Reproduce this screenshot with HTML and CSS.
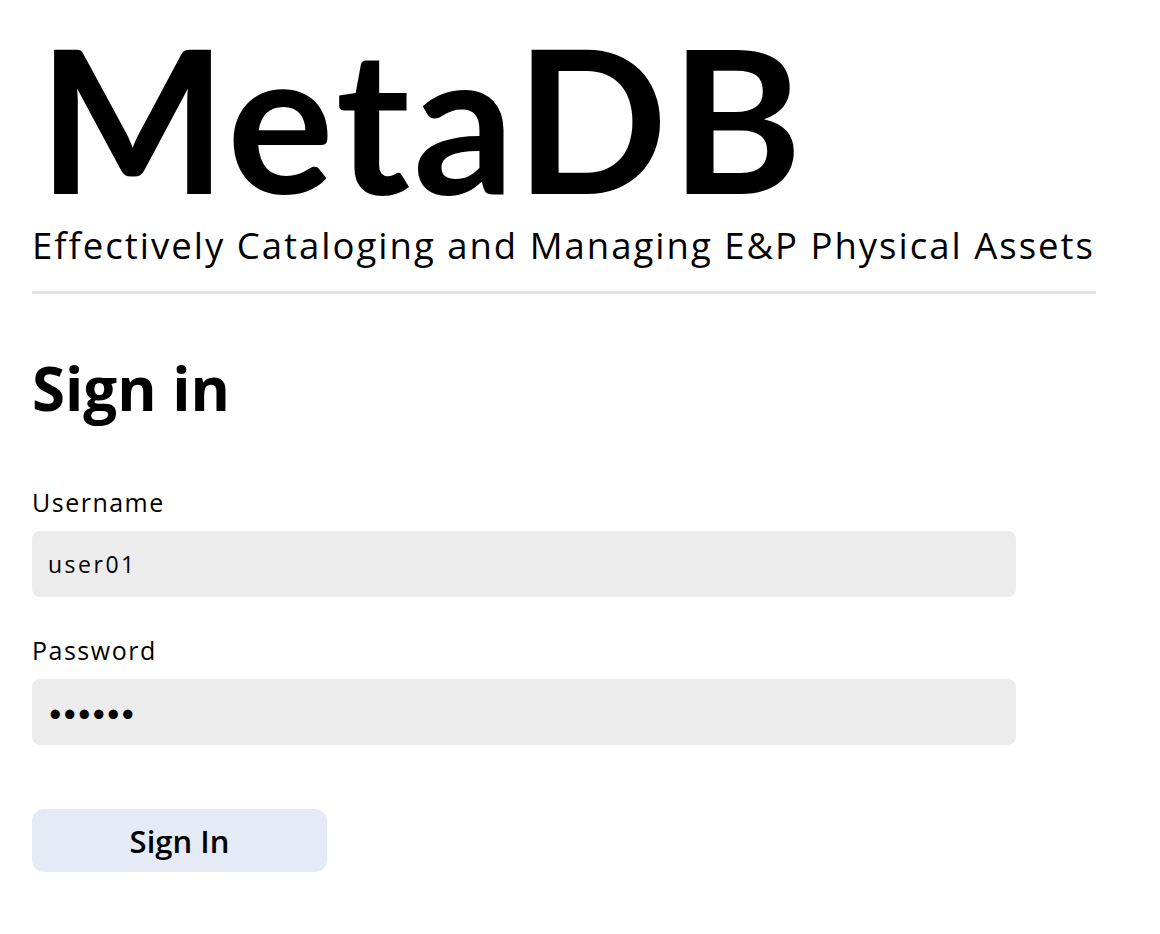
FILE: index.html
```html
<!DOCTYPE html>
<html lang="en">
<head>
<meta charset="utf-8">
<title>MetaDB - Sign in</title>
<link rel="stylesheet" href="styles.css">
</head>
<body>
<div class="page">
  <header class="masthead">
    <h1 class="brand">MetaDB</h1>
    <p class="tagline">Effectively Cataloging and Managing E&amp;P Physical Assets</p>
  </header>
  <main class="signin">
    <h2 class="signin-title">Sign in</h2>
    <form class="signin-form">
      <label class="field-label" for="username">Username</label>
      <input class="field-input" id="username" type="text" value="user01">
      <label class="field-label field-label-second" for="password">Password</label>
      <input class="field-input field-input-secret" id="password" type="password" value="123456">
      <button class="signin-button" type="button">Sign In</button>
    </form>
  </main>
</div>
</body>
</html>
```
FILE: styles.css
```css
html, body {
  margin: 0;
  padding: 0;
  background: #ffffff;
  color: #000000;
  font-family: "Open Sans", "Lato", sans-serif;
}

.page {
  width: 1064px;
  padding: 17px 32px 40px;
}

.masthead {
  display: flex;
  flex-direction: column;
  border-bottom: 3px solid #e2e2e2;
  padding-bottom: 23px;
}

.brand {
  margin: 0;
  padding-left: 6px;
  font-family: "Lato", "Open Sans", sans-serif;
  font-size: 200px;
  line-height: 200px;
  font-weight: 700;
  letter-spacing: 3px;
}

.tagline {
  margin: 5px 0 0;
  font-size: 36.5px;
  line-height: 46px;
  font-weight: 400;
  letter-spacing: 2px;
}

.signin-title {
  margin: 58px 0 0;
  font-size: 60px;
  line-height: 72px;
  font-weight: 700;
}

.signin-form {
  display: flex;
  flex-direction: column;
  align-items: flex-start;
  margin-top: 63px;
}

.field-label {
  font-size: 25px;
  line-height: 30px;
  letter-spacing: 1.5px;
}

.field-label-second {
  margin-top: 38px;
}

.field-input {
  box-sizing: border-box;
  width: 984px;
  height: 66px;
  margin-top: 14px;
  padding: 0 16px;
  border: none;
  border-radius: 8px;
  background: #ececec;
  font-family: inherit;
  font-size: 23px;
  letter-spacing: 2.5px;
  color: #000;
  outline: none;
}

.field-input-secret {
  font-family: "Lato", sans-serif;
  font-size: 25px;
  letter-spacing: 0;
}

.signin-button {
  box-sizing: border-box;
  width: 295px;
  height: 63px;
  margin-top: 64px;
  border: none;
  border-radius: 12px;
  background: #e5ebf6;
  font-family: inherit;
  font-size: 31px;
  font-weight: 600;
  color: #000;
  cursor: pointer;
}
```
